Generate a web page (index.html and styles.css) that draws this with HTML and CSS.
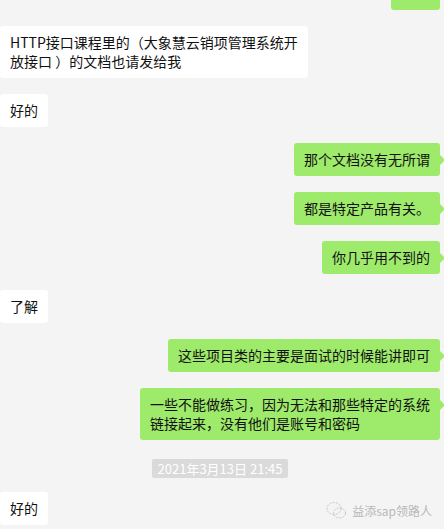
FILE: index.html
```html
<!DOCTYPE html>
<html lang="zh-CN">
<head>
    <meta charset="UTF-8">
    <meta name="viewport" content="width=device-width, initial-scale=1.0">
    <title>聊天记录</title>
    <link rel="stylesheet" href="styles.css">
</head>
<body>
    <div class="chat">
        <div class="msg right cut"><div class="bubble"></div></div>

        <div class="msg left">
            <div class="bubble">HTTP接口课程里的（大象慧云销项管理系统开<br>放接口 ）的文档也请发给我</div>
        </div>
        <div class="msg left"><div class="bubble">好的</div></div>

        <div class="msg right"><div class="bubble">那个文档没有无所谓</div></div>
        <div class="msg right"><div class="bubble">都是特定产品有关。</div></div>
        <div class="msg right"><div class="bubble">你几乎用不到的</div></div>

        <div class="msg left"><div class="bubble">了解</div></div>

        <div class="msg right"><div class="bubble">这些项目类的主要是面试的时候能讲即可</div></div>
        <div class="msg right">
            <div class="bubble">一些不能做练习，因为无法和那些特定的系统<br>链接起来，没有他们是账号和密码</div>
        </div>

        <div class="time"><span>2021年3月13日 21:45</span></div>

        <div class="msg left"><div class="bubble">好的</div></div>
    </div>

    <!-- watermark over the last row -->
    <div class="watermark">
        <svg width="21" height="19" viewBox="0 0 21 19" fill="none" stroke="#c4c4c4" stroke-width="1" stroke-dasharray="2 1.2">
            <ellipse cx="8" cy="7.5" rx="7" ry="6"/>
            <ellipse cx="13.5" cy="12" rx="6" ry="5"/>
        </svg>
        <span>益添sap领路人</span>
    </div>
</body>
</html>
```

FILE: styles.css
```css
body {
    margin: 0;
    padding: 0;
    background-color: #f4f4f4;
    font-family: "Microsoft YaHei", "Noto Sans CJK SC", "Noto Sans", sans-serif;
    font-size: 14px;
    color: #111111;
    height: 529px;
    overflow: hidden;
    position: relative;
}
.chat {
    display: flex;
    flex-direction: column;
    gap: 16px;
    padding: 0 4px 0 0;
}
.msg {
    display: flex;
}
.msg.left {
    justify-content: flex-start;
}
.msg.right {
    justify-content: flex-end;
}
.bubble {
    position: relative;
    padding: 7px 10px;
    line-height: 19px;
    border-radius: 3px;
    background-color: #ffffff;
    white-space: nowrap;
}
.msg.right .bubble {
    background-color: #9eea6a;
}
.msg.right .bubble::after {
    content: "";
    position: absolute;
    right: -5px;
    top: 12px;
    border-left: 5px solid #9eea6a;
    border-top: 5px solid transparent;
    border-bottom: 5px solid transparent;
}
.msg.cut {
    margin-top: -24px;
}
.msg.cut .bubble {
    width: 29px;
    height: 20px;
}
.time {
    display: flex;
    justify-content: center;
    margin: 3px 0 -2px;
}
.time span {
    background-color: #dadada;
    color: #ffffff;
    font-size: 13px;
    line-height: 19px;
    padding: 0 6px;
    border-radius: 2px;
}
.watermark {
    position: absolute;
    right: 12px;
    bottom: 9px;
    display: flex;
    align-items: center;
    gap: 5px;
    color: #b8b8b8;
    font-size: 12px;
}
```
